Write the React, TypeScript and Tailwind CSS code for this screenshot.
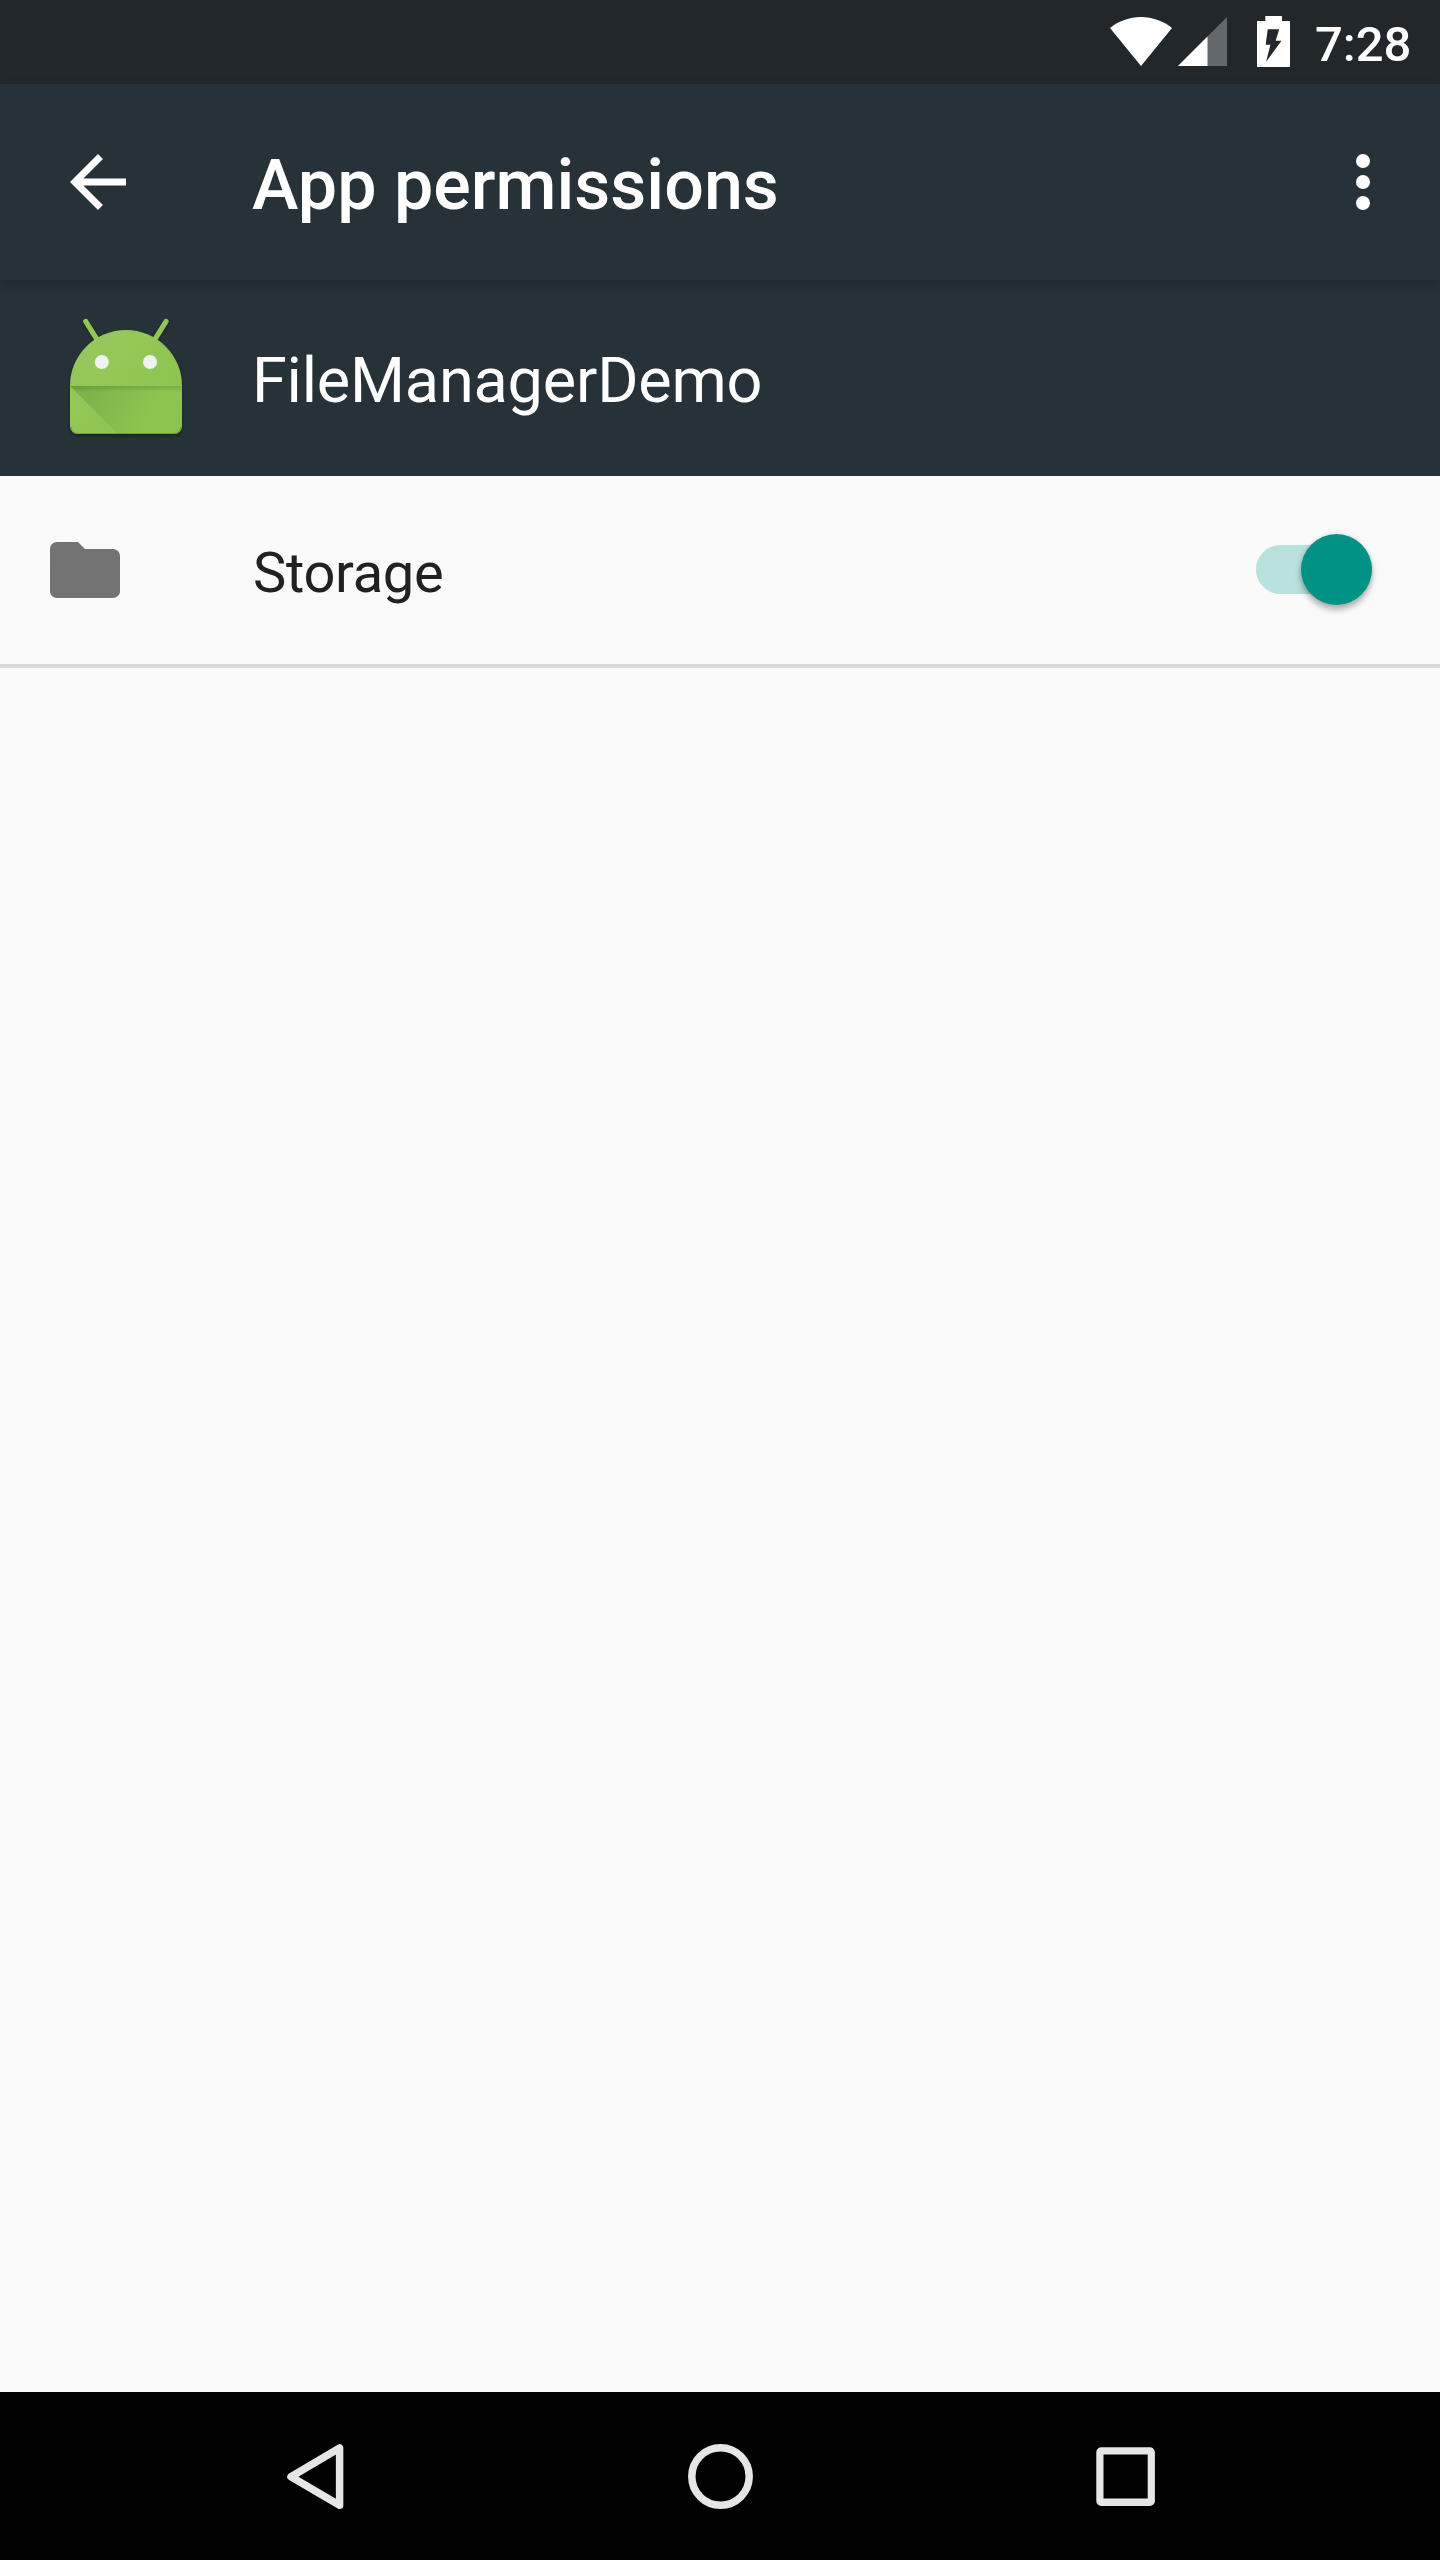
import React from "react";

function StatusBar() {
  return (
    <header className="flex h-[84px] items-start justify-end bg-[#21272b] pr-[28px] text-white">
      <svg className="mt-[17px] mr-[6px] h-[49px] w-[62px]" viewBox="0 0 62 49" fill="currentColor">
        <path d="M31 49 0 11C8.500 4 19.500 0 31 0s22.500 4 31 11Z" />
      </svg>
      <svg className="mt-[17px] mr-[30px] h-[49px] w-[49px]" viewBox="0 0 49 49" fill="currentColor">
        <path d="M49 0v49H0Z" fillOpacity=".3" />
        <path d="M29.500 19.500V49H0Z" />
      </svg>
      <svg className="mt-[16px] mr-[25px] h-[51px] w-[33px]" viewBox="0 0 33 51" fill="currentColor">
        <path
          fillRule="evenodd"
          d="M8.300 0h16.700v5h8v46H0V5h8.300ZM10.700 13.200 8.700 28.800h4.700L9.100 45.700 24.500 24.700h-5.800L22.200 13.200Z"
        />
      </svg>
      <span className="mt-[16px] h-[58px] w-[97px] whitespace-nowrap text-[49px] leading-[58px] font-medium">7:28</span>
    </header>
  );
}

function Toolbar() {
  return (
    <div className="relative z-10 flex h-[196px] items-center bg-[#263238] pr-[35px] pl-[56px] text-white shadow-[0_4px_10px_rgba(0,0,0,0.22)]">
      <button aria-label="Back" className="size-[84px]">
        <svg className="size-[84px]" viewBox="0 0 24 24" fill="currentColor">
          <path d="M20 11H7.830l5.590-5.590L12 4l-8 8 8 8 1.410-1.410L7.830 13H20Z" />
        </svg>
      </button>
      <h1 className="ml-[112px] flex-1 pt-[6px] text-[70px] leading-[82px] font-medium">App permissions</h1>
      <button aria-label="More options" className="size-[84px]">
        <svg className="size-[84px]" viewBox="0 0 84 84" fill="currentColor">
          <circle cx="42" cy="21" r="7" />
          <circle cx="42" cy="42" r="7" />
          <circle cx="42" cy="63" r="7" />
        </svg>
      </button>
    </div>
  );
}

function AndroidIcon() {
  return (
    <svg className="size-[168px] shrink-0" viewBox="42 294 168 168">
      <defs>
        <linearGradient id="body" x1="70" y1="340" x2="182" y2="434" gradientUnits="userSpaceOnUse">
          <stop stopColor="#97c95e" />
          <stop offset="1" stopColor="#8bc34a" />
        </linearGradient>
        <linearGradient id="fold" x1="72" y1="386" x2="145" y2="425" gradientUnits="userSpaceOnUse">
          <stop stopColor="#33691e" stopOpacity=".28" />
          <stop offset="1" stopColor="#33691e" stopOpacity="0" />
        </linearGradient>
        <linearGradient id="seam" x1="0" y1="386" x2="0" y2="392" gradientUnits="userSpaceOnUse">
          <stop stopColor="#33691e" stopOpacity=".25" />
          <stop offset="1" stopColor="#33691e" stopOpacity="0" />
        </linearGradient>
        <filter id="drop" x="-20%" y="-20%" width="140%" height="140%">
          <feDropShadow dx="0" dy="1.500" stdDeviation="1.500" floodColor="#000" floodOpacity=".4" />
        </filter>
      </defs>
      <g filter="url(#drop)">
        <path d="M85.800 321.500 97 339.500M166 321.500 154.800 339.500" stroke="#92c755" strokeWidth="5.200" strokeLinecap="round" />
        <path d="M70 386a56 56 0 0 1 112 0v40a8 8 0 0 1-8 8H78a8 8 0 0 1-8-8Z" fill="url(#body)" />
      </g>
      <path d="M70 386h112v40a8 8 0 0 1-8 8h-56Z" fill="url(#fold)" />
      <path d="M70 386h112v6H76Z" fill="url(#seam)" />
      <path d="M71 427q1 6 7 6.500h96q6-.5 7-6.500" fill="none" stroke="#558b2f" strokeOpacity=".6" />
      <circle cx="101.800" cy="362" r="7" fill="#f1f1f1" />
      <circle cx="150" cy="362" r="7" fill="#f1f1f1" />
    </svg>
  );
}

function AppHeader() {
  return (
    <section className="flex h-[196px] items-center bg-[#263238] pl-[42px] text-white">
      <AndroidIcon />
      <h2 className="ml-[42px] pt-[6px] text-[63px] leading-[74px] tracking-[-0.2px]">FileManagerDemo</h2>
    </section>
  );
}

function PermissionRow() {
  return (
    <div className="flex h-[192px] items-center border-b-4 border-[#dbdbdb] pr-[68px] pl-[43px]">
      <svg className="size-[84px]" viewBox="0 0 24 24" fill="#737373">
        <path d="M10 4H4c-1.100 0-1.990.9-1.990 2L2 18c0 1.100.9 2 2 2h16c1.100 0 2-.9 2-2V8c0-1.100-.9-2-2-2h-8l-2-2Z" />
      </svg>
      <span className="ml-[126px] flex-1 pt-[6px] text-[56px] leading-[66px] tracking-[-0.3px] text-[#212121]">Storage</span>
      <button role="switch" aria-checked="true" aria-label="Storage" className="mb-[2px] flex h-[49px] w-[116px] items-center justify-end rounded-full bg-[#b9e1dd]">
        <span className="size-[71px] shrink-0 rounded-full bg-[#009385] shadow-[0_5px_6px_rgba(0,0,0,0.28),0_0_5px_rgba(0,0,0,0.12)]" />
      </button>
    </div>
  );
}

function NavigationBar() {
  return (
    <nav className="flex h-[168px] items-center justify-between bg-black px-[245px]">
      <svg className="size-[140px]" viewBox="245 2406 140 140" fill="none" stroke="#e6e6e6" strokeWidth="7.500" strokeLinejoin="round">
        <path d="M291 2476.700 339.600 2447.900V2505.200Z" />
      </svg>
      <svg className="size-[140px]" viewBox="650 2406 140 140" fill="none" stroke="#e6e6e6" strokeWidth="7.500">
        <circle cx="720.500" cy="2476.500" r="28.700" />
      </svg>
      <svg className="size-[140px]" viewBox="1055 2406 140 140" fill="#e6e6e6">
        <path fillRule="evenodd" d="M1101.300 2447.300h48.600a5 5 0 0 1 5 5v48.600a5 5 0 0 1-5 5h-48.600a5 5 0 0 1-5-5v-48.600a5 5 0 0 1 5-5ZM1103.500 2454.500v44h44.200v-44Z" />
      </svg>
    </nav>
  );
}

export default function App() {
  return (
    <div className="flex h-[2560px] w-[1440px] flex-col overflow-hidden bg-[#fafafa] font-['Roboto',sans-serif]">
      <StatusBar />
      <Toolbar />
      <AppHeader />
      <main className="flex-1">
        <PermissionRow />
      </main>
      <NavigationBar />
    </div>
  );
}
